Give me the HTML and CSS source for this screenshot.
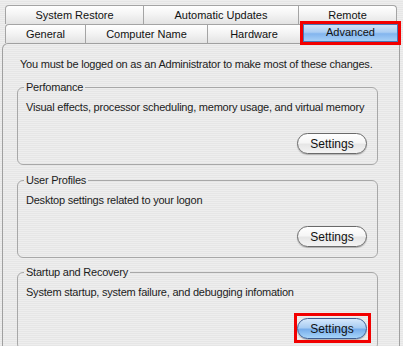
FILE: index.html
```html
<!DOCTYPE html>
<html lang="en">
<head>
    <meta charset="UTF-8">
    <meta name="viewport" content="width=device-width, initial-scale=1.0">
    <title>System Properties - Advanced</title>
    <link rel="stylesheet" href="styles.css">
</head>
<body>
    <div class="dialog">
        <div class="tabs">
            <div class="tab-row">
                <div class="tab tab-restore">System Restore</div>
                <div class="tab tab-updates">Automatic Updates</div>
                <div class="tab tab-remote">Remote</div>
            </div>
            <div class="tab-row">
                <div class="tab tab-general">General</div>
                <div class="tab tab-name">Computer Name</div>
                <div class="tab tab-hardware">Hardware</div>
                <div class="tab tab-active">Advanced</div>
            </div>
        </div>

        <div class="panel">
            <p class="intro">You must be logged on as an Administrator to make most of these changes.</p>

            <fieldset class="group">
                <legend>Perfomance</legend>
                <p class="desc">Visual effects, processor scheduling, memory usage, and virtual memory</p>
                <div class="actions"><button class="btn">Settings</button></div>
            </fieldset>

            <fieldset class="group">
                <legend>User Profiles</legend>
                <p class="desc">Desktop settings related to your logon</p>
                <div class="actions"><button class="btn">Settings</button></div>
            </fieldset>

            <fieldset class="group">
                <legend>Startup and Recovery</legend>
                <p class="desc">System startup, system failure, and debugging infomation</p>
                <div class="actions">
                    <span class="highlight"><button class="btn btn-default">Settings</button></span>
                </div>
            </fieldset>
        </div>
    </div>
</body>
</html>
```

FILE: styles.css
```css
body {
    margin: 0;
    font-family: "Liberation Sans", Arial, sans-serif;
    font-size: 11px;
    line-height: 13px;
    letter-spacing: -0.22px;
    color: #1c1c1c;
    background: repeating-linear-gradient(to bottom, #eeeeee 0, #eeeeee 1px, #e6e6e6 1px, #e6e6e6 2px);
    height: 346px;
    overflow: hidden;
}

.tabs {
    margin-left: 5px;
    padding-top: 5px;
}

.tab-row {
    display: flex;
    height: 19px;
}

.tab {
    box-sizing: border-box;
    height: 19px;
    border-top: 1px solid #a4a4a4;
    border-right: 1px solid #a4a4a4;
    background: linear-gradient(#ffffff, #f4f4f4 45%, #e3e3e3);
    text-align: center;
    line-height: 18px;
    letter-spacing: 0;
    color: #111;
}

.tab:first-child {
    border-left: 1px solid #a4a4a4;
    border-top-left-radius: 4px;
}

.tab-remote {
    border-top-right-radius: 4px;
}

.tab-restore { width: 139px; }
.tab-updates { width: 155px; }
.tab-remote { width: 98px; }

.tab-general { width: 81px; }
.tab-name { width: 122px; }
.tab-hardware { width: 92px; border-right: none; }

.tab-active {
    width: 95px;
    height: 18px;
    margin-left: 3px;
    border: 1px solid #4a75b4;
    background: linear-gradient(#d3e5f9, #aacdf3 45%, #83b5ee 55%, #a6cff6);
    line-height: 15px;
    outline: 3px solid #f20000;
    outline-offset: 0;
}

.panel {
    box-sizing: border-box;
    width: 398px;
    margin-left: 2px;
    min-height: 303px;
    padding: 14px 21px 0 14px;
    border: 1px solid #a0a0a0;
    border-bottom: none;
    border-top-left-radius: 6px;
}

.intro {
    margin: 0 0 0 3px;
    white-space: nowrap;
}

.group {
    box-sizing: border-box;
    width: 361px;
    margin: 9px 0 0;
    padding: 0 10px 10px 8px;
    border: 1px solid #a8a8a8;
    border-radius: 6px;
}

.group:first-of-type {
    margin-top: 10px;
}

.group:last-of-type {
    margin-top: 8px;
}

.group legend {
    padding: 0 2px;
    margin-left: -2px;
    line-height: 13px;
}

.desc {
    margin: 7px 0 0;
    white-space: nowrap;
}

.actions {
    display: flex;
    justify-content: flex-end;
    margin-top: 19px;
}

.btn {
    box-sizing: border-box;
    width: 70px;
    height: 21px;
    padding: 0;
    border: 1px solid #6a6a6a;
    border-radius: 11px;
    background: linear-gradient(#ffffff, #f6f6f6 45%, #e6e6e6 55%, #f4f4f4);
    box-shadow: 0 1px 1px rgba(0, 0, 0, 0.25);
    font-family: "Liberation Sans", Arial, sans-serif;
    font-size: 12px;
    color: #111;
}

.highlight {
    display: flex;
    padding: 2px 1px 1px 0;
    margin: -5px -4px -4px -3px;
    border: 3px solid #f20000;
}

.btn-default {
    border-color: #3d5d93;
    background: linear-gradient(#d6e8fb, #a9cdf3 45%, #78aeeb 55%, #a6d4f9);
}
```
